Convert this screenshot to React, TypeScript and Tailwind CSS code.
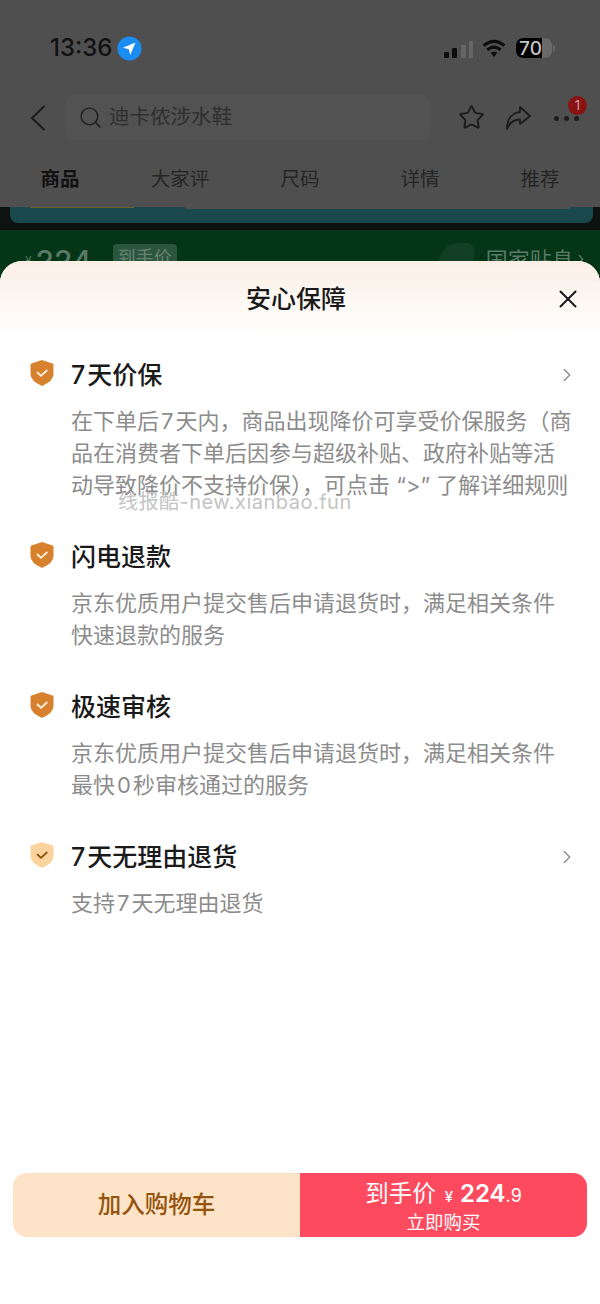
import type { ReactNode } from 'react'
import { ChevronRight, Search, Star, X } from 'lucide-react'

const cjk = "font-['Inter','Noto_Sans_CJK_SC',sans-serif]"

const tabs = ['商品', '大家评', '尺码', '详情', '推荐']

const Digit = ({ children }: { children: ReactNode }) => <span className="px-[2px]">{children}</span>

const Shield = ({ light }: { light?: boolean }) => (
  <svg width="24" height="28" viewBox="0 0 24 28" className="mt-[-4px] shrink-0">
    <path
      d="M12 1 L22.5 4.6 Q23.5 5 23.5 6 V15 Q23.5 22 12 27 Q0.5 22 0.5 15 V6 Q0.5 5 1.5 4.6 Z"
      fill={light ? '#fcd29d' : '#d7812f'}
    />
    <path
      d="M7.5 13.5 L11 16.8 L16.8 11.5"
      fill="none"
      stroke={light ? '#8a5310' : '#fff3e2'}
      strokeWidth="1.8"
      strokeLinecap="round"
      strokeLinejoin="round"
    />
  </svg>
)

const Guarantee = ({
  title,
  lines,
  light,
  arrow,
}: {
  title: ReactNode
  lines: ReactNode[]
  light?: boolean
  arrow?: boolean
}) => (
  <div className="flex flex-col">
    <div className="flex h-10 items-center">
      <div className="w-[41px]">
        <Shield light={light} />
      </div>
      <span className="flex-1 text-[25px] font-medium leading-10 text-[#1a1a1a]">{title}</span>
      {arrow && <ChevronRight size={22} strokeWidth={1.5} className="text-[#8b8b8b]" />}
    </div>
    <div className="mt-[10px] pl-[41px] text-[22px] leading-8 text-[#8c8c8c]">
      {lines.map((line, i) => (
        <div key={i} className="whitespace-nowrap">
          {line}
        </div>
      ))}
    </div>
  </div>
)

export default function App() {
  return (
    <div className={`${cjk} relative flex h-[1304px] w-[600px] flex-col overflow-hidden bg-[#4f4f4f]`}>
      {/* status bar */}
      <div className="flex h-[95px] items-start justify-between pl-[50px] pr-[45px] pt-[34px]">
        <div className="flex items-center gap-[5px]">
          <span className="font-['Inter'] text-[24px] font-medium leading-7 text-[#111]">13:36</span>
          <svg width="25" height="25" viewBox="0 0 25 25">
            <circle cx="12.5" cy="12.5" r="12" fill="#1b8cf2" />
            <path d="M18.5 6.5 L6 11.8 L11.8 13.2 L13.2 19 Z" fill="#fff" />
          </svg>
        </div>
        <div className="flex items-center pt-[4px]">
          <svg width="29" height="17" viewBox="0 0 29 17" className="mt-[2px]">
            <rect x="0" y="11" width="5" height="6" rx="1" fill="#0c0c0c" />
            <rect x="8" y="7" width="5" height="10" rx="1" fill="#0c0c0c" />
            <rect x="17" y="4" width="5" height="13" rx="1" fill="#666" />
            <rect x="25" y="0" width="4" height="17" rx="1" fill="#666" />
          </svg>
          <svg width="24" height="19" viewBox="0 0 24 20" className="ml-[9px] mr-[10px]">
            <path d="M1 7 Q12 -2 23 7" fill="none" stroke="#0c0c0c" strokeWidth="3.2" />
            <path d="M5 11.5 Q12 5.5 19 11.5" fill="none" stroke="#0c0c0c" strokeWidth="3.2" />
            <path d="M8.5 14.6 Q12 12 15.5 14.6 L12 19 Z" fill="#0c0c0c" />
          </svg>
          <div className="flex items-center">
            <div className="flex h-[20px] w-[36px] items-center overflow-hidden rounded-[7px] bg-[#6a6a6a]">
              <div className="flex h-full w-[26px] items-center justify-center bg-black pl-[3px] text-[19px] font-medium leading-none text-[#c4c4c4]">
                70
              </div>
            </div>
            <div className="ml-[1px] h-[7px] w-[2px] rounded-r bg-[#666]" />
          </div>
        </div>
      </div>

      {/* search row */}
      <div className="flex h-[45px] items-center">
        <svg width="16" height="26" viewBox="0 0 16 26" className="ml-[30px]">
          <path d="M14.5 1 L2 13 L14.5 25" fill="none" stroke="#1c1c1c" strokeWidth="2" />
        </svg>
        <div className="ml-[20px] flex h-[45px] w-[364px] items-center rounded-lg bg-[#525252] pl-[12px]">
          <Search size={25} strokeWidth={1.4} className="text-[#1f1f1f]" />
          <span className="ml-[6px] text-[20.5px] text-[#2f2f2f]">迪卡侬涉水鞋</span>
        </div>
        <Star size={27} strokeWidth={1.7} className="ml-[28px] text-[#1c1c1c]" />
        <svg width="26" height="26" viewBox="0 0 26 26" className="ml-[20px]">
          <path
            d="M15 2 L25 11 L15 19 V14.5 C9 14.5 4.5 17.5 2 24 C2 14 7 8 15 7 Z"
            fill="none"
            stroke="#1c1c1c"
            strokeWidth="1.8"
            strokeLinejoin="round"
          />
        </svg>
        <div className="relative ml-[23px] flex gap-[5px] pt-[1px]">
          <span className="size-[5px] rounded-full bg-[#1c1c1c]" />
          <span className="size-[5px] rounded-full bg-[#1c1c1c]" />
          <span className="size-[5px] rounded-full bg-[#1c1c1c]" />
          <span className="absolute left-[14px] top-[-19px] flex size-[19px] items-center justify-center rounded-full bg-[#8a1212] text-[13px] leading-none text-[#c9a0a0]">
            1
          </span>
        </div>
      </div>

      {/* tabs */}
      <div className="mt-[20px] grid h-[47px] grid-cols-5 pt-[5px] text-[19.5px] leading-7 text-[#252525]">
        {tabs.map((tab, i) => (
          <span key={tab} className={i === 0 ? 'text-center font-bold text-[#111]' : 'text-center'}>
            {tab}
          </span>
        ))}
      </div>

      {/* page behind the sheet */}
      <div className="h-[23px] bg-[#0e1211] pl-[10px] pr-[7px]">
        <div className="relative h-[16px] rounded-b-lg bg-[#19494d]">
          <div className="ml-[20px] h-[1px] w-[104px] bg-[#6e6222]" />
          <div className="absolute left-[175px] top-0 h-[2px] w-[385px] rounded-b bg-[#4f4f4f]" />
        </div>
      </div>
      <div className="flex h-[51px] items-start bg-[#043517] pt-[15px]">
        <span className="ml-[25px] mt-[8px] text-[12px] leading-4 text-[#5b7a66]">¥</span>
        <span className="ml-[4px] font-['Inter'] text-[30px] font-medium leading-8 text-[#5b7a66]">224</span>
        <span className="ml-[2px] mt-[18px] size-[5px] rounded-full bg-[#5b7a66]" />
        <span className="ml-[14px] mt-[-1px] rounded bg-[#2c553d] px-[5px] text-[18px] leading-7 text-[#65836f]">到手价</span>
        <span className="ml-[262px] mt-[-2px] h-[24px] w-[35px] rounded-tl-[20px] rounded-tr-[8px] bg-[#123f24]" />
        <span className="ml-[12px] mt-[1px] text-[22px] leading-7 text-[#5b7a66]">国家贴息</span>
        <ChevronRight size={14} strokeWidth={2} className="mt-[7px] text-[#5b7a66]" />
      </div>

      {/* sheet */}
      <div className="relative mt-[-20px] flex flex-1 flex-col rounded-t-[22px] bg-white">
        <div className="relative flex h-[74px] items-center justify-center rounded-t-[22px] bg-gradient-to-b from-[#faefe5] to-white pr-[8px] pt-[3px]">
          <span className="text-[25px] font-medium text-[#1a1a1a]">安心保障</span>
          <X size={30} strokeWidth={1.6} className="absolute right-[17px] top-[23px] text-[#1a1a1a]" />
        </div>
        <div className="flex flex-col gap-9 pl-[30px] pr-[22px] pt-[20px]">
          <Guarantee
            title={<><span className="pr-[2px]">7</span>天价保</>}
            arrow
            lines={[
              <>在下单后<Digit>7</Digit>天内，商品出现降价可享受价保服务（商</>,
              '品在消费者下单后因参与超级补贴、政府补贴等活',
              '动导致降价不支持价保），可点击 “>” 了解详细规则',
            ]}
          />
          <Guarantee
            title="闪电退款"
            lines={['京东优质用户提交售后申请退货时，满足相关条件', '快速退款的服务']}
          />
          <Guarantee
            title="极速审核"
            lines={['京东优质用户提交售后申请退货时，满足相关条件', <>最快<Digit>0</Digit>秒审核通过的服务</>]}
          />
          <Guarantee
            title={<><span className="pr-[2px]">7</span>天无理由退货</>}
            light
            arrow
            lines={[<>支持<Digit>7</Digit>天无理由退货</>]}
          />
        </div>

        <div className="absolute bottom-[67px] left-[13px] flex h-[64px] w-[574px] overflow-hidden rounded-[14px]">
          <div className="flex w-[287px] items-center justify-center bg-[#fde3c8] text-[23.5px] font-medium text-[#95540d]">
            加入购物车
          </div>
          <div className="flex w-[287px] flex-col items-center justify-center bg-[#fd4a5e] text-white">
            <div className="flex items-baseline text-[23.5px] leading-[30px]">
              <span>到手价</span>
              <span className="ml-[9px] text-[15px] font-medium">¥</span>
              <span className="ml-[7px] font-['Inter'] text-[24px] font-semibold">224</span>
              <span className="font-['Inter'] text-[18px]">.9</span>
            </div>
            <span className="text-[18.5px] leading-[20px]">立即购买</span>
          </div>
        </div>
      </div>

      {/* watermark */}
      <span className="pointer-events-none absolute left-[118px] top-[489px] text-[20px] leading-[26px] tracking-[0.5px] text-[#c4c4c4]">
        线报酷-new.xianbao.fun
      </span>
    </div>
  )
}
